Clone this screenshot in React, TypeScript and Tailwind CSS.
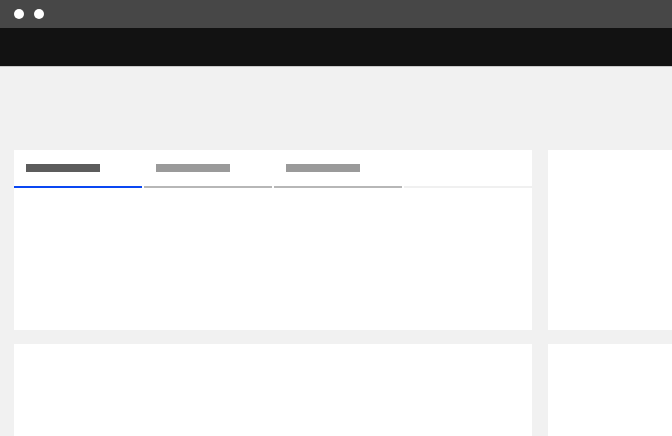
export default function App() {
  const tabs = [
    { active: true },
    { active: false },
    { active: false },
  ];

  return (
    <div className="h-[436px] w-[672px] overflow-hidden bg-[#f1f1f1]">
      {/* window chrome */}
      <div className="flex h-[28px] items-center gap-[10px] bg-[#474747] pl-[14px]">
        <span className="h-[10px] w-[10px] rounded-full bg-white" />
        <span className="h-[10px] w-[10px] rounded-full bg-white" />
      </div>
      <div className="h-[39px] border-b border-[#c9c9c9] bg-[#121212]" />

      <div className="flex flex-col gap-[14px] pl-[14px] pt-[83px]">
        <div className="flex gap-[16px]">
          <div className="h-[180px] w-[518px] shrink-0 bg-white">
            <div className="flex gap-[2px]">
              {tabs.map((t, i) => (
                <div key={i} className="w-[128px]">
                  <div className="h-[36px] pl-[12px] pt-[14px]">
                    <div className={`h-[8px] w-[74px] ${t.active ? "bg-[#5c5c5c]" : "bg-[#9a9a9a]"}`} />
                  </div>
                  <div className={`h-[2px] ${t.active ? "bg-[#0a47f2]" : "bg-[#b7b7b7]"}`} />
                </div>
              ))}
              <div className="w-[128px] pt-[36px]">
                <div className="h-[2px] bg-[#f0f0f0]" />
              </div>
            </div>
          </div>
          <div className="h-[180px] w-[300px] shrink-0 bg-white" />
        </div>
        <div className="flex gap-[16px]">
          <div className="h-[180px] w-[518px] shrink-0 bg-white" />
          <div className="h-[180px] w-[300px] shrink-0 bg-white" />
        </div>
      </div>
    </div>
  );
}
